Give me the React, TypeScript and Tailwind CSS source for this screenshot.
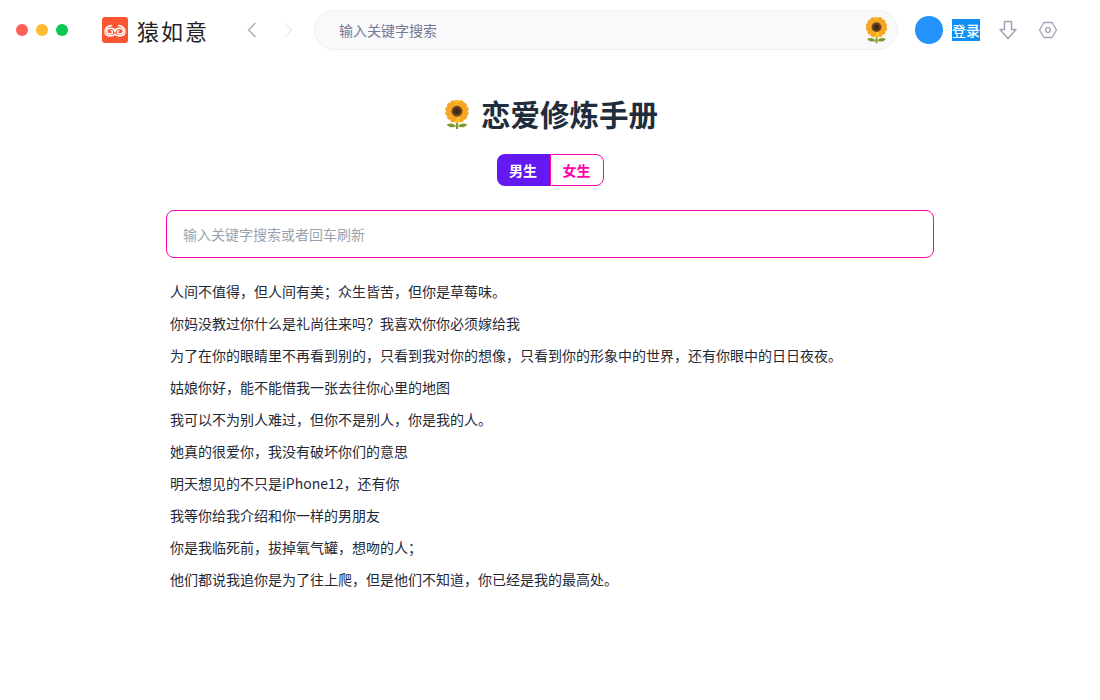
const lines = [
  "人间不值得，但人间有美；众生皆苦，但你是草莓味。",
  "你妈没教过你什么是礼尚往来吗？我喜欢你你必须嫁给我",
  "为了在你的眼睛里不再看到别的，只看到我对你的想像，只看到你的形象中的世界，还有你眼中的日日夜夜。",
  "姑娘你好，能不能借我一张去往你心里的地图",
  "我可以不为别人难过，但你不是别人，你是我的人。",
  "她真的很爱你，我没有破坏你们的意思",
  "明天想见的不只是iPhone12，还有你",
  "我等你给我介绍和你一样的男朋友",
  "你是我临死前，拔掉氧气罐，想吻的人；",
  "他们都说我追你是为了往上爬，但是他们不知道，你已经是我的最高处。",
];

const Sunflower = ({ className }: { className: string }) => {
  const petals = Array.from({ length: 14 }, (_, i) => (i * 360) / 14);
  return (
    <svg viewBox="0 0 32 32" className={className}>
      <path d="M16 18v13" stroke="#7c9a2e" strokeWidth="2.4" />
      <path d="M15 28c-2-3-6-4-10-2 2 3 6 4 10 2zM17 28c2-3 6-4 10-2-2 3-6 4-10 2z" fill="#7c9a2e" />
      {petals.map((a) => (
        <ellipse key={a} cx="16" cy="3.8" rx="3.1" ry="4.6" fill={a % 2 ? "#f5a623" : "#fcc21b"} transform={`rotate(${a} 16 12)`} />
      ))}
      <circle cx="16" cy="12" r="5.8" fill="#6b4423" />
      <circle cx="16" cy="12" r="3.2" fill="#3f2a16" />
    </svg>
  );
};

const App = () => {
  return (
    <div className="h-[700px] w-[1100px] overflow-hidden bg-white font-['Noto_Sans_CJK_SC',sans-serif]">
      <header className="flex h-[60px] items-center">
        <div className="ml-4 flex gap-2">
          <span className="size-3 rounded-full bg-[#ff5f57]" />
          <span className="size-3 rounded-full bg-[#febc2e]" />
          <span className="size-3 rounded-full bg-[#0ac751]" />
        </div>
        <div className="ml-[34px] flex size-[26px] items-center justify-center rounded-[3px] bg-[#fc5531]">
          {/* two mirrored swirls */}
          <svg viewBox="0 0 26 26" className="size-[26px]" fill="none" stroke="#fff" strokeWidth="1.4" strokeLinecap="round">
            <path d="M9.500 8.500C6 9 3 11 3 14.500c0 3 2.500 4.500 5.500 4.500 1.800 0 3.400-.6 4.500-1.700" />
            <path d="M12.800 14.500c0-2-2-3.300-4.300-3.300-2.200 0-3.700 1.300-3.700 3 0 1.700 1.500 2.800 3.300 2.800 1.500 0 2.500-.8 2.500-1.900 0-.9-.7-1.500-1.700-1.500" />
            <path d="M16.500 8.500C20 9 23 11 23 14.500c0 3-2.500 4.500-5.500 4.500-1.800 0-3.400-.6-4.500-1.700" />
            <path d="M13.200 14.500c0-2 2-3.300 4.300-3.300 2.200 0 3.700 1.300 3.700 3 0 1.700-1.500 2.800-3.300 2.800-1.500 0-2.500-.8-2.500-1.900 0-.9.700-1.500 1.700-1.500" />
          </svg>
        </div>
        <span className="ml-[9px] w-[72px] text-[22px] leading-none tracking-[2px] text-[#222226]">猿如意</span>
        <svg viewBox="0 0 12 16" className="ml-[37px] h-[18px] w-3" fill="none" stroke="#a3a3b8" strokeWidth="1.2">
          <path d="M9.500 1 2.500 8l7 7" />
        </svg>
        <svg viewBox="0 0 12 16" className="ml-6 h-[18px] w-3" fill="none" stroke="#ebebf2" strokeWidth="1.2">
          <path d="M2.500 1l7 7-7 7" />
        </svg>
        <div className="ml-5 flex h-10 w-[584px] items-center justify-between rounded-full border border-[#f0f0f5] bg-[#f9f9fc] pl-6 pr-[7px]">
          <span className="text-sm text-[#77778f]">输入关键字搜索</span>
          <Sunflower className="size-[27px]" />
        </div>
        <div className="ml-[17px] size-7 rounded-full bg-[#2492fb]" />
        <span className="ml-[9px] bg-[#0f8ff5] text-sm font-medium leading-[22px] text-white">登录</span>
        <svg viewBox="0 0 20 20" className="ml-[18px] size-5" fill="none" stroke="#a3a3b8" strokeWidth="1.5" strokeLinejoin="round">
          <path d="M6.500 1.500h7v8H18L10 18.500 2 9.500h4.500z" />
        </svg>
        <svg viewBox="0 0 20 20" className="ml-[20px] size-5" fill="none" stroke="#a3a3b8" strokeWidth="1.4" strokeLinejoin="round">
          <path d="M6 2.500h8L18.500 10 14 17.500H6L1.500 10z" />
          <circle cx="10" cy="10" r="2.4" />
        </svg>
      </header>

      <main className="mx-auto flex w-[768px] flex-col items-center">
        <h1 className="mt-[35px] flex h-10 items-center text-[29.5px] font-bold leading-10 text-[#1f2d3d]">
          <Sunflower className="mr-[9px] size-[30px]" />
          <span className="pb-1">恋爱修炼手册</span>
        </h1>
        <div className="mt-[19px] flex h-8 w-[107px] text-sm font-bold leading-none">
          <button className="flex w-[53px] items-center justify-center rounded-l-lg bg-[#6419f0] text-white">男生</button>
          <button className="flex w-[54px] items-center justify-center rounded-r-lg border border-[#ff00aa] bg-white text-[#ff00aa]">女生</button>
        </div>
        <div className="mt-6 flex h-12 w-full items-center rounded-lg border border-[#ff00aa] px-4 text-sm text-[#9ca3af]">
          输入关键字搜索或者回车刷新
        </div>
        <ul className="mt-[17px] flex w-full flex-col px-1 text-sm leading-8 text-[#1f2937]">
          {lines.map((line) => (
            <li key={line}>{line}</li>
          ))}
        </ul>
      </main>
    </div>
  );
};

export default App;
